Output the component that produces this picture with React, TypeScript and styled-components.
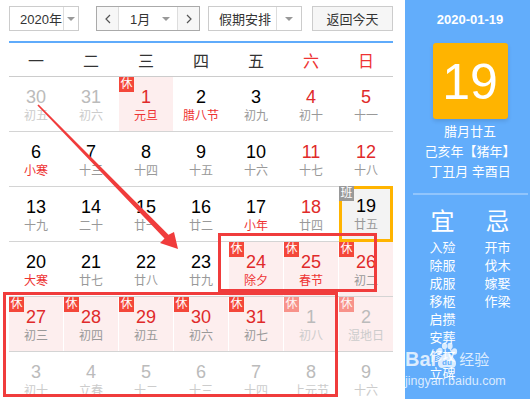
import styled, { createGlobalStyle } from "styled-components";

const GlobalStyle = createGlobalStyle`
  html, body {
    margin: 0;
    padding: 0;
    background: #fff;
  }
  body {
    font-family: "Liberation Sans", "Noto Sans CJK SC", sans-serif;
  }
`;

const Page = styled.div`
  position: relative;
  display: flex;
  width: 530px;
  height: 399px;
  overflow: hidden;
  background: #fff;
`;

const Main = styled.div`
  width: 384px;
  padding: 0 12px 0 9px;
  flex-shrink: 0;
`;

const Toolbar = styled.div`
  display: flex;
  align-items: flex-start;
  box-sizing: border-box;
  height: 43px;
  padding-top: 6px;
  border-bottom: 2px solid #5fabfb;
`;

const Select = styled.div<{ $w: number; $ml?: number }>`
  display: flex;
  box-sizing: border-box;
  width: ${(p) => p.$w}px;
  height: 25px;
  margin-left: ${(p) => p.$ml ?? 0}px;
  border: 1px solid #ccc;
  font-size: 13px;
  color: #333;
  background: #fff;
`;

const SelectText = styled.div<{ $pl?: number }>`
  flex: 1;
  display: flex;
  align-items: center;
  padding-left: ${(p) => p.$pl ?? 10}px;
`;

const Caret = styled.div<{ $w: number; $line?: boolean }>`
  width: ${(p) => p.$w}px;
  display: flex;
  align-items: center;
  justify-content: center;
  border-left: ${(p) => (p.$line ? "1px solid #ddd" : "none")};
  &::after {
    content: "";
    border-left: 4px solid transparent;
    border-right: 4px solid transparent;
    border-top: 4px solid #999;
  }
`;

const MonthGroup = styled.div`
  display: flex;
  box-sizing: border-box;
  width: 104px;
  height: 25px;
  margin-left: 17px;
  border: 1px solid #aaa;
  font-size: 13px;
  color: #333;
`;

const StepBtn = styled.div`
  width: 21px;
  display: flex;
  align-items: center;
  justify-content: center;
  background: #f7f7f7;
  &:first-child {
    border-right: 1px solid #ddd;
  }
  &:last-child {
    border-left: 1px solid #ddd;
  }
`;

const TodayBtn = styled.div`
  display: flex;
  align-items: center;
  justify-content: center;
  box-sizing: border-box;
  width: 81px;
  height: 25px;
  margin-left: 10px;
  border: 1px solid #ccc;
  background: #f6f6f6;
  font-size: 13px;
  color: #333;
`;

const WeekHead = styled.div`
  display: grid;
  grid-template-columns: repeat(7, 1fr);
  column-gap: 1px;
  height: 33px;
  border-bottom: 1px solid #ccc;
`;

const WeekName = styled.div<{ $red?: boolean }>`
  display: flex;
  align-items: center;
  justify-content: center;
  font-size: 16px;
  color: ${(p) => (p.$red ? "#e33" : "#333")};
`;

const Row = styled.div`
  display: grid;
  grid-template-columns: repeat(7, 1fr);
  column-gap: 1px;
  height: 54px;
  border-bottom: 1px solid #d4d4d4;
`;

const Cell = styled.div<{ $rest?: boolean; $today?: boolean }>`
  position: relative;
  box-sizing: border-box;
  display: flex;
  flex-direction: column;
  align-items: center;
  padding-top: ${(p) => (p.$today ? 7 : 10)}px;
  background: ${(p) => (p.$today ? "#f3f3f3" : p.$rest ? "#fdeeee" : "transparent")};
  border: ${(p) => (p.$today ? "3px solid #ffb400" : "none")};
  margin-top: ${(p) => (p.$today ? -1 : 0)}px;
  height: ${(p) => (p.$today ? 56 : 54)}px;
`;

const Num = styled.div<{ $tone: "black" | "red" | "out" }>`
  font-size: 18px;
  line-height: 20px;
  color: ${(p) => (p.$tone === "red" ? "#e02a2a" : p.$tone === "out" ? "#bbb" : "#000")};
`;

const Lunar = styled.div<{ $tone: "gray" | "red" | "out" }>`
  font-size: 12px;
  line-height: 16px;
  margin-top: 1px;
  color: ${(p) => (p.$tone === "red" ? "#e33" : p.$tone === "out" ? "#ccc" : "#999")};
`;

const Badge = styled.div<{ $kind: "rest" | "work"; $faded?: boolean }>`
  position: absolute;
  top: ${(p) => (p.$kind === "work" ? -3 : 0)}px;
  left: ${(p) => (p.$kind === "work" ? -3 : 0)}px;
  width: 15px;
  height: 15px;
  font-size: 12px;
  line-height: 15px;
  text-align: center;
  color: #fff;
  background: ${(p) => (p.$kind === "work" ? "#999" : "#f4473a")};
  opacity: ${(p) => (p.$faded ? 0.55 : 1)};
`;

const Side = styled.div`
  width: 125px;
  flex-shrink: 0;
  box-sizing: border-box;
  padding-left: 5px;
  background: #62adfb;
  color: #fff;
  text-align: center;
`;

const SideDate = styled.div`
  padding-top: 12px;
  font-size: 13px;
  font-weight: bold;
  line-height: 16px;
`;

const DayBox = styled.div`
  width: 75px;
  height: 76px;
  margin: 15px auto 0;
  border-radius: 3px;
  background: #ffb400;
  box-shadow: 0 2px 4px rgba(0, 0, 0, 0.12);
  font-size: 50px;
  line-height: 78px;
`;

const SideLines = styled.div`
  margin-top: 3px;
  font-size: 13px;
  line-height: 20px;
`;

const Divider = styled.div`
  width: 115px;
  height: 2px;
  margin: 11px auto 0;
  background: rgba(255, 255, 255, 0.3);
`;

const Almanac = styled.div`
  display: grid;
  grid-template-columns: 55px 55px;
  justify-content: center;
  margin-top: 13px;
`;

const Col = styled.div`
  display: flex;
  flex-direction: column;
  align-items: center;
`;

const Big = styled.div`
  font-size: 24px;
  line-height: 28px;
  margin-bottom: 3px;
`;

const Item = styled.div`
  font-size: 13px;
  line-height: 18px;
`;

const Watermark = styled.div`
  position: absolute;
  left: 405px;
  top: 340px;
  color: rgba(255, 255, 255, 0.78);
`;

const Brand = styled.div`
  display: flex;
  align-items: flex-end;
  height: 30px;
`;

const BrandBai = styled.span`
  font-size: 20px;
  font-weight: bold;
  line-height: 22px;
`;

const BrandJy = styled.span`
  font-size: 15px;
  line-height: 20px;
  margin-left: 1px;
`;

const BrandUrl = styled.div`
  font-size: 12.5px;
  line-height: 14px;
  margin-top: 4px;
`;

const Overlay = styled.svg`
  position: absolute;
  left: 0;
  top: 0;
  pointer-events: none;
`;

type Day = {
  n: number;
  l: string;
  tone?: "black" | "red" | "out";
  lr?: boolean;
  rest?: boolean;
  today?: boolean;
};

const weeks: Day[][] = [
  [
    { n: 30, l: "初五", tone: "out" },
    { n: 31, l: "初六", tone: "out" },
    { n: 1, l: "元旦", tone: "red", lr: true, rest: true },
    { n: 2, l: "腊八节", lr: true },
    { n: 3, l: "初九" },
    { n: 4, l: "初十", tone: "red" },
    { n: 5, l: "十一", tone: "red" },
  ],
  [
    { n: 6, l: "小寒", lr: true },
    { n: 7, l: "十三" },
    { n: 8, l: "十四" },
    { n: 9, l: "十五" },
    { n: 10, l: "十六" },
    { n: 11, l: "十七", tone: "red" },
    { n: 12, l: "十八", tone: "red" },
  ],
  [
    { n: 13, l: "十九" },
    { n: 14, l: "二十" },
    { n: 15, l: "廿一" },
    { n: 16, l: "廿二" },
    { n: 17, l: "小年", lr: true },
    { n: 18, l: "廿四", tone: "red" },
    { n: 19, l: "廿五", today: true },
  ],
  [
    { n: 20, l: "大寒", lr: true },
    { n: 21, l: "廿七" },
    { n: 22, l: "廿八" },
    { n: 23, l: "廿九" },
    { n: 24, l: "除夕", tone: "red", lr: true, rest: true },
    { n: 25, l: "春节", tone: "red", lr: true, rest: true },
    { n: 26, l: "初二", tone: "red", rest: true },
  ],
  [
    { n: 27, l: "初三", tone: "red", rest: true },
    { n: 28, l: "初四", tone: "red", rest: true },
    { n: 29, l: "初五", tone: "red", rest: true },
    { n: 30, l: "初六", tone: "red", rest: true },
    { n: 31, l: "初七", tone: "red", rest: true },
    { n: 1, l: "初八", tone: "out", rest: true },
    { n: 2, l: "湿地日", tone: "out", rest: true },
  ],
  [
    { n: 3, l: "初十", tone: "out" },
    { n: 4, l: "立春", tone: "out" },
    { n: 5, l: "十二", tone: "out" },
    { n: 6, l: "十三", tone: "out" },
    { n: 7, l: "十四", tone: "out" },
    { n: 8, l: "上元节", tone: "out" },
    { n: 9, l: "十六", tone: "out" },
  ],
];

const weekNames = ["一", "二", "三", "四", "五", "六", "日"];
const yi = ["入殓", "除服", "成服", "移柩", "启攒", "安葬", "修坟", "立碑"];
const ji = ["开市", "伐木", "嫁娶", "作梁"];

const Chevron = ({ dir }: { dir: "l" | "r" }) => (
  <svg width="6" height="10" viewBox="0 0 6 10">
    <polyline
      points={dir === "l" ? "5,1 1,5 5,9" : "1,1 5,5 1,9"}
      fill="none"
      stroke="#555"
      strokeWidth="1.2"
    />
  </svg>
);

const Paw = () => (
  <svg width="22" height="28" viewBox="0 0 22 28">
    <ellipse cx="4" cy="9" rx="2.6" ry="3.2" fill="currentColor" />
    <ellipse cx="8.5" cy="4" rx="2.6" ry="3.3" fill="currentColor" />
    <ellipse cx="14" cy="4" rx="2.6" ry="3.3" fill="currentColor" />
    <ellipse cx="18.5" cy="9.5" rx="2.6" ry="3.2" fill="currentColor" />
    <path
      d="M11 11 C7 11 5 15 3 18 C1 21 2 26 6 26 C8 26 9 25 11 25 C13 25 14 26 16 26 C20 26 21 21 19 18 C17 15 15 11 11 11 Z"
      fill="currentColor"
    />
    <text x="11" y="23" fontSize="8" fontWeight="bold" textAnchor="middle" fill="#62adfb" fontFamily="Liberation Sans, sans-serif">
      du
    </text>
  </svg>
);

export default function App() {
  return (
    <Page>
      <GlobalStyle />
      <Main>
        <Toolbar>
          <Select $w={70}>
            <SelectText>2020年</SelectText>
            <Caret $w={14} $line />
          </Select>
          <MonthGroup>
            <StepBtn>
              <Chevron dir="l" />
            </StepBtn>
            <SelectText $pl={11}>1月</SelectText>
            <Caret $w={22} />
            <StepBtn>
              <Chevron dir="r" />
            </StepBtn>
          </MonthGroup>
          <Select $w={94} $ml={8}>
            <SelectText>假期安排</SelectText>
            <Caret $w={24} $line />
          </Select>
          <TodayBtn>返回今天</TodayBtn>
        </Toolbar>
        <WeekHead>
          {weekNames.map((w, i) => (
            <WeekName key={w} $red={i >= 5}>
              {w}
            </WeekName>
          ))}
        </WeekHead>
        {weeks.map((week, wi) => (
          <Row key={wi}>
            {week.map((d, di) => (
              <Cell key={di} $rest={d.rest} $today={d.today}>
                {d.rest && (
                  <Badge $kind="rest" $faded={d.tone === "out"}>
                    休
                  </Badge>
                )}
                {d.today && <Badge $kind="work">班</Badge>}
                <Num $tone={d.tone ?? "black"}>{d.n}</Num>
                <Lunar $tone={d.tone === "out" ? "out" : d.lr ? "red" : "gray"}>{d.l}</Lunar>
              </Cell>
            ))}
          </Row>
        ))}
      </Main>
      <Side>
        <SideDate>2020-01-19</SideDate>
        <DayBox>19</DayBox>
        <SideLines>
          <div>腊月廿五</div>
          <div>己亥年【猪年】</div>
          <div>丁丑月 辛酉日</div>
        </SideLines>
        <Divider />
        <Almanac>
          <Col>
            <Big>宜</Big>
            {yi.map((t) => (
              <Item key={t}>{t}</Item>
            ))}
          </Col>
          <Col>
            <Big>忌</Big>
            {ji.map((t) => (
              <Item key={t}>{t}</Item>
            ))}
          </Col>
        </Almanac>
      </Side>
      <Watermark>
        <Brand>
          <BrandBai>Bai</BrandBai>
          <Paw />
          <BrandJy>经验</BrandJy>
        </Brand>
        <BrandUrl>jingyan.baidu.com</BrandUrl>
      </Watermark>
      <Overlay width="530" height="399" viewBox="0 0 530 399">
        <rect x="219.5" y="234.5" width="156" height="56" fill="none" stroke="#f03c3c" strokeWidth="3" />
        <rect x="4.5" y="293.5" width="332" height="102" fill="none" stroke="#f03c3c" strokeWidth="3" />
        <polygon
          points="37.4,105.6 38.6,104.4 168.5,234.8 174,232 178,249 160,243 164.5,238.6"
          fill="#f03c3c"
        />
      </Overlay>
    </Page>
  );
}
